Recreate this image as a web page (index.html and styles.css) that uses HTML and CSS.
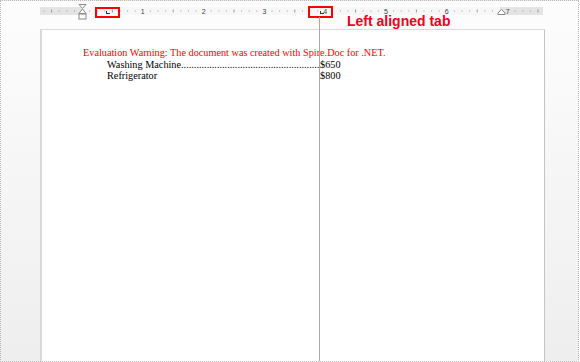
FILE: index.html
```html
<!DOCTYPE html>
<html>
<head>
<meta charset="utf-8">
<link rel="stylesheet" href="styles.css">
</head>
<body>
<div class="frame">
  <div class="ruler-wrap">
    <svg class="ruler" width="503" height="8" viewBox="0 0 503 8">
      <rect x="0" y="0" width="503" height="8" fill="#e4e4e4"/>
      <rect x="42" y="0" width="418" height="8" fill="#f7f7f7"/>
      <g fill="#9a9a9a" id="ticks"></g>
      <g class="nums" font-size="7" fill="#444" text-anchor="middle">
        <text x="102.8" y="6.5">1</text>
        <text x="163.6" y="6.5">2</text>
        <text x="224.4" y="6.5">3</text>
        <text x="285.2" y="6.5">4</text>
        <text x="346" y="6.5">5</text>
        <text x="406.8" y="6.5">6</text>
        <text x="467.6" y="6.5">7</text>
      </g>
    </svg>
    <svg class="mk-indent" width="9" height="16" viewBox="0 0 9 16">
      <path d="M1 0.5 H8 L4.5 4.5 Z" fill="#fff" stroke="#8a8a8a"/>
      <path d="M4.5 5 L8 9.5 H1 Z" fill="#fff" stroke="#8a8a8a"/>
      <rect x="1" y="10" width="7" height="5" fill="#fff" stroke="#8a8a8a"/>
    </svg>
    <span class="tabbox tb1"><i class="tab"></i></span>
    <span class="tabbox tb2"><i class="tab"></i></span>
    <svg class="mk-right" width="9" height="6" viewBox="0 0 9 6">
      <path d="M4.5 0.5 L8 4 V5.5 H1 V4 Z" fill="#fff" stroke="#8a8a8a"/>
    </svg>
    <span class="callout">Left aligned tab</span>
  </div>
  <div class="page">
    <p class="warn">Evaluation Warning: The document was created with Spire.Doc for .NET.</p>
    <p class="row"><span class="item"><span class="name">Washing Machine</span><span class="leader">....................................................................................................................</span></span><span class="price">$650</span></p>
    <p class="row"><span class="item"><span class="name">Refrigerator</span></span><span class="price">$800</span></p>
  </div>
  <div class="tabline"></div>
</div>
<script>
  var g = document.getElementById('ticks');
  var s = '';
  for (var i = -5; i <= 60; i++) {
    if (i % 8 === 0) continue;
    var x = 42 + i * 60.8 / 8;
    if (x < 1 || x > 502) continue;
    if (i % 4 === 0) s += '<rect x="' + (x - 0.5).toFixed(1) + '" y="2.5" width="1" height="3"/>';
    else s += '<rect x="' + (x - 0.5).toFixed(1) + '" y="3.5" width="1" height="1"/>';
  }
  g.innerHTML = s;
</script>
</body>
</html>
```
FILE: styles.css
```css
html, body {
  margin: 0;
  padding: 0;
}
body {
  width: 580px;
  height: 362px;
  overflow: hidden;
  font-family: "Liberation Serif", "Times New Roman", serif;
}
.frame {
  position: relative;
  box-sizing: border-box;
  width: 579px;
  height: 362px;
  border: 1px dotted #b8b8b8;
  background: linear-gradient(#fdfdfd, #eeeeee);
  overflow: hidden;
}
.ruler-wrap {
  position: relative;
  margin: 6px 0 0 39px;
  width: 503px;
  height: 8px;
}
.ruler {
  display: block;
  font-family: "Liberation Sans", Arial, sans-serif;
}
.mk-indent {
  position: absolute;
  left: 38px;
  top: -3px;
}
.mk-right {
  position: absolute;
  left: 457px;
  top: 2px;
}
.tabbox {
  position: absolute;
  top: 0px;
  width: 21px;
  height: 7px;
  border: 2px solid #ff0000;
}
.tb1 { left: 55px; }
.tb2 { left: 268px; top: -1px; height: 8px; }
.tab {
  position: absolute;
  left: 9px;
  top: 2px;
  width: 3px;
  height: 2px;
  border-left: 1px solid #333;
  border-bottom: 1px solid #333;
}
.tb2 .tab { left: 10px; top: 3px; }
.callout {
  position: absolute;
  left: 307px;
  top: 9px;
  font-family: "Liberation Sans", Arial, sans-serif;
  font-weight: bold;
  font-size: 14px;
  line-height: 10px;
  color: #f2001c;
  white-space: nowrap;
}
.page {
  box-sizing: border-box;
  margin: 14px 0 0 39px;
  width: 505px;
  height: 340px;
  background: #fff;
  border-left: 2px solid #d8d8d8;
  border-top: 1px solid #dadada;
  border-right: 1px solid #c4c4c4;
  padding: 17px 0 0 41px;
  font-size: 10.25px;
  line-height: 11.5px;
}
.page p {
  margin: 0;
  white-space: nowrap;
}
.warn {
  color: #ff0000;
}
.row {
  display: flex;
  padding-left: 24px;
  color: #000;
}
.item {
  display: flex;
  width: 213px;
  overflow: hidden;
}
.leader {
  flex: 1;
  overflow: hidden;
}
.tabline {
  position: absolute;
  left: 318px;
  top: 16px;
  width: 1px;
  height: 346px;
  background: #a8a8a8;
}
```
